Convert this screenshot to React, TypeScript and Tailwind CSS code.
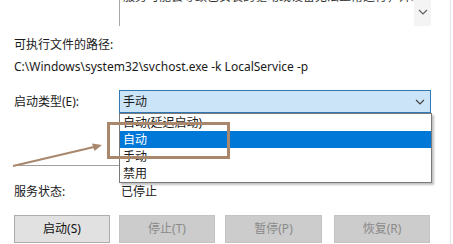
import React from "react";

const font = { fontFamily: '"Noto Sans", "Noto Sans CJK SC", sans-serif' };

function Chevron({ className = "" }: { className?: string }) {
  return (
    <svg width="10" height="6" viewBox="0 0 10 6" className={className}>
      <path d="M1 1 L5 5 L9 1" fill="none" stroke="currentColor" strokeWidth="1.2" />
    </svg>
  );
}

function Btn({ label, disabled, className = "" }: { label: string; disabled?: boolean; className?: string }) {
  return (
    <div
      className={`flex h-[28px] w-[96px] items-center justify-center border text-[12px] ${
        disabled
          ? "border-[#c4c4c4] bg-[#cccccc] text-[#8a8a8a]"
          : "border-[#adadad] bg-[#e1e1e1] text-[#111]"
      } ${className}`}
    >
      {label}
    </div>
  );
}

export default function App() {
  return (
    <div
      className="relative h-[244px] w-[453px] overflow-hidden bg-white text-[12px] text-[#1a1a1a]"
      style={font}
    >
      <div className="absolute right-[2px] top-0 h-full w-px bg-[#e4e4e4]" />
      {/* description box */}
      <div className="flex h-[26px] pl-[119px]">
        <div className="flex w-[312px] overflow-hidden border-l border-[#a8a8a8]">
          <div className="flex-1 overflow-hidden pl-[3px]">
            <div className="mt-[-11px] whitespace-nowrap leading-[16px] text-[#333]">
              服务可能会导致已安装的驱动或设备无法正常运行，开发
            </div>
          </div>
          <div className="flex w-[17px] items-start justify-center bg-[#f4f4f4] pt-[9px] text-[#606060]">
            <Chevron />
          </div>
        </div>
      </div>

      <div className="pl-[14px]">
        <div className="mt-[11px] leading-[16px]">可执行文件的路径:</div>
        <div className="mt-[6px] leading-[16px]">C:\Windows\system32\svchost.exe -k LocalService -p</div>

        <div className="mt-[15px] flex items-center">
          <div className="w-[105px]">启动类型(E):</div>
          <div className="flex h-[23px] w-[312px] items-center justify-between border border-[#2f78b4] bg-[#cce4f7] pl-[3px] pr-[5px]">
            <span>手动</span>
            <Chevron className="text-[#444]" />
          </div>
        </div>

        <div className="mt-[52px] h-px w-[105px] bg-[#a0a0a0]" />

        <div className="mt-[18px] flex items-center leading-[16px]">
          <div className="w-[107px]">服务状态:</div>
          <div>已停止</div>
        </div>

        <div className="mt-[15px] flex">
          <Btn label="启动(S)" />
          <Btn label="停止(T)" disabled className="ml-[9px]" />
          <Btn label="暂停(P)" disabled className="ml-[10px] w-[97px]" />
          <Btn label="恢复(R)" disabled className="ml-[12px]" />
        </div>
      </div>

      {/* dropdown list */}
      <div className="absolute left-[119px] top-[113px] w-[313px] border border-[#7a7a7a] bg-white shadow-[2px_2px_2px_rgba(0,0,0,0.25)]">
        {["自动(延迟启动)", "自动", "手动", "禁用"].map((t) => (
          <div
            key={t}
            className={`h-[17px] pl-[3px] leading-[17px] ${t === "自动" ? "bg-[#0078d7] text-white" : ""}`}
          >
            {t}
          </div>
        ))}
      </div>

      {/* annotation */}
      <div className="absolute left-[107px] top-[122px] h-[37px] w-[123px] border-[3px] border-[#a8876c]" />
      <svg className="absolute left-0 top-0" width="453" height="244">
        <line x1="13" y1="166" x2="94" y2="147" stroke="#a8876c" strokeWidth="2.2" />
        <path d="M102 145 L92 143.5 L94.5 151 Z" fill="#a8876c" />
      </svg>
    </div>
  );
}
